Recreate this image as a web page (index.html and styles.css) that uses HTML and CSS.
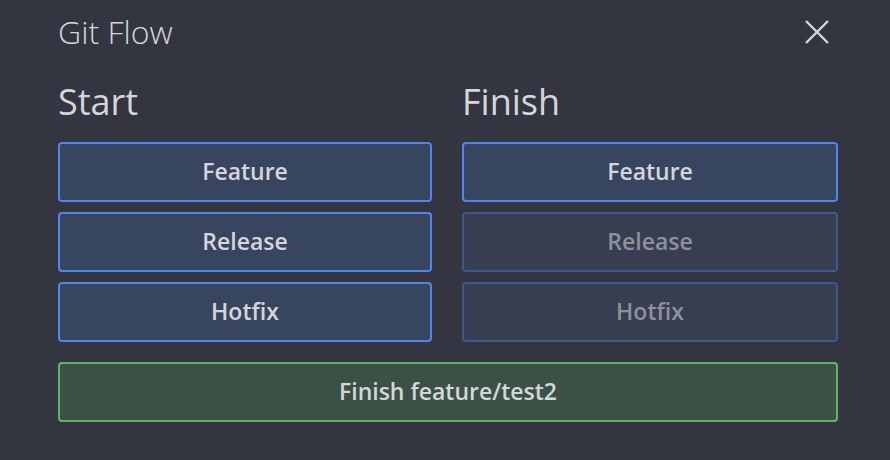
FILE: index.html
```html
<!DOCTYPE html>
<html>
<head>
<meta charset="utf-8">
<link rel="stylesheet" href="styles.css">
</head>
<body>
<div class="dialog">
  <header class="head">
    <h1 class="title">Git Flow</h1>
    <button class="close" aria-label="Close">
      <svg width="24" height="24" viewBox="0 0 24 24"><path d="M1 1 L23 23 M23 1 L1 23" stroke="#d4d6da" stroke-width="2.4" fill="none"/></svg>
    </button>
  </header>
  <div class="cols">
    <section class="col">
      <h2 class="sub">Start</h2>
      <button class="btn">Feature</button>
      <button class="btn">Release</button>
      <button class="btn">Hotfix</button>
    </section>
    <section class="col">
      <h2 class="sub">Finish</h2>
      <button class="btn">Feature</button>
      <button class="btn off">Release</button>
      <button class="btn off">Hotfix</button>
    </section>
  </div>
  <button class="btn go">Finish feature/test2</button>
</div>
</body>
</html>
```
FILE: styles.css
```css
html, body {
  margin: 0;
  padding: 0;
  background: #333640;
  width: 890px;
  height: 460px;
  overflow: hidden;
  font-family: "Open Sans", "Noto Sans", sans-serif;
  color: #d4d6da;
}
.dialog {
  padding: 0 52px 0 58px;
}
.head {
  display: flex;
  justify-content: space-between;
  align-items: center;
  height: 64px;
}
.title {
  margin: 0;
  font-size: 32px;
  font-weight: 300;
  line-height: 1;
  color: #d4d6da;
}
.close {
  background: none;
  border: 0;
  padding: 0;
  margin: 0 9px 0 0;
  display: flex;
  width: 24px;
  height: 24px;
}
.cols {
  display: grid;
  grid-template-columns: 374px 376px;
  column-gap: 30px;
  width: 780px;
}
.col {
  display: flex;
  flex-direction: column;
  gap: 10px;
}
.sub {
  margin: 0;
  font-size: 36px;
  font-weight: 400;
  line-height: 1;
  height: 68px;
  padding-top: 20px;
  box-sizing: border-box;
  color: #d4d6da;
}
.btn {
  display: block;
  height: 60px;
  box-sizing: border-box;
  border: 2px solid #4f86ed;
  border-radius: 4px;
  background: #37455f;
  color: #d4d6da;
  font-family: "Open Sans", "Noto Sans", sans-serif;
  font-size: 23px;
  font-weight: 600;
  padding: 0 0 2px;
  text-align: center;
}
.btn.off {
  border-color: #3d5891;
  background: #373e52;
  color: #8e9199;
}
.btn.go {
  width: 780px;
  margin-top: 20px;
  border-color: #5cb85c;
  background: #3b5145;
}
```
